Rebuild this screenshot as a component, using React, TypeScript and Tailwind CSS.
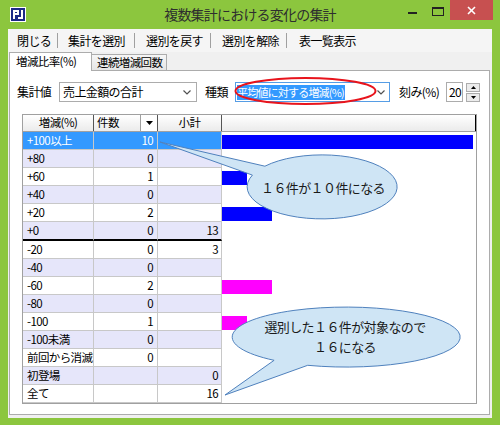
import React from 'react';

type Row = {
  label: string;
  count: string;
  sub: string;
  bar: number;
  color?: string;
  sel?: boolean;
};

const rows: Row[] = [
  { label: '+100以上', count: '10', sub: '', bar: 10, color: '#0000ff', sel: true },
  { label: '+80', count: '0', sub: '', bar: 0 },
  { label: '+60', count: '1', sub: '', bar: 1, color: '#0000ff' },
  { label: '+40', count: '0', sub: '', bar: 0 },
  { label: '+20', count: '2', sub: '', bar: 2, color: '#0000ff' },
  { label: '+0', count: '0', sub: '13', bar: 0 },
  { label: '-20', count: '0', sub: '3', bar: 0 },
  { label: '-40', count: '0', sub: '', bar: 0 },
  { label: '-60', count: '2', sub: '', bar: 2, color: '#ff00ff' },
  { label: '-80', count: '0', sub: '', bar: 0 },
  { label: '-100', count: '1', sub: '', bar: 1, color: '#ff00ff' },
  { label: '-100未満', count: '0', sub: '', bar: 0 },
  { label: '前回から消滅', count: '0', sub: '', bar: 0 },
  { label: '初登場', count: '', sub: '0', bar: 0 },
  { label: '全て', count: '', sub: '16', bar: 0 },
];

const BAR_UNIT = 25.1;

function AppIcon() {
  return (
    <svg width="16" height="15" viewBox="0 0 16 15">
      <rect x="0" y="0" width="16" height="15" fill="#ffffff" />
      <rect x="1" y="1" width="14" height="13" fill="#1c2a86" />
      {/* P */}
      <rect x="3" y="3" width="2" height="9" fill="#ffffff" />
      <rect x="3" y="3" width="5" height="2" fill="#ffffff" />
      <rect x="7" y="3" width="2" height="5" fill="#ffffff" />
      <rect x="3" y="6" width="5" height="2" fill="#ffffff" />
      {/* J */}
      <rect x="11" y="3" width="2" height="8" fill="#ffffff" />
      <rect x="8" y="10" width="5" height="2" fill="#ffffff" />
    </svg>
  );
}

function Chevron() {
  return (
    <svg width="8" height="5" viewBox="0 0 8 5">
      <polyline points="0.5,0.5 4,4 7.5,0.5" fill="none" stroke="#505050" strokeWidth="1.2" />
    </svg>
  );
}

function Triangle({ up = false, size = 7 }: { up?: boolean; size?: number }) {
  const h = Math.ceil(size / 2);
  return (
    <svg width={size} height={h} viewBox={`0 0 ${size} ${h}`}>
      <polygon points={up ? `0,${h} ${size / 2},0 ${size},${h}` : `0,0 ${size},0 ${size / 2},${h}`} fill="#000000" />
    </svg>
  );
}

function Overlay() {
  const font = "'Noto Sans CJK JP', 'Noto Sans', sans-serif";
  return (
    <svg className="absolute inset-0 pointer-events-none" width="500" height="425" viewBox="0 0 500 425">
      {/* red annotation ring */}
      <ellipse cx="305.5" cy="91" rx="70" ry="13" fill="none" stroke="#e8141c" strokeWidth="2" />
      {/* callout 1 */}
      <path
        d="M 264.9 166.2 L 160 142 L 252.4 175.1 A 75 32 0 1 0 264.9 166.2 Z"
        fill="#cfe5f5"
        stroke="#4f81bd"
        strokeWidth="1"
      />
      <text x="323" y="193" textAnchor="middle" fontFamily={font} fontSize="13" fill="#1a1a1a">
        １６件が１０件になる
      </text>
      {/* callout 2 */}
      <path
        d="M 274.1 360.3 L 225 395 L 307.7 365.3 A 114 30 0 1 0 274.1 360.3 Z"
        fill="#cfe5f5"
        stroke="#4f81bd"
        strokeWidth="1"
      />
      <text x="345" y="332" textAnchor="middle" fontFamily={font} fontSize="13" fill="#1a1a1a">
        選別した１６件が対象なので
      </text>
      <text x="345" y="352" textAnchor="middle" fontFamily={font} fontSize="13" fill="#1a1a1a">
        １６になる
      </text>
    </svg>
  );
}

export default function App() {
  return (
    <div className="relative w-[500px] h-[425px] bg-[#8cc63e] flex flex-col font-['Noto_Sans_CJK_JP','Noto_Sans',sans-serif] text-[11.5px] tracking-[-0.6px] text-black whitespace-nowrap overflow-hidden">
      {/* Title bar */}
      <div className="grid grid-cols-[1fr_auto_1fr] h-[29px] shrink-0">
        <div className="flex items-center pl-[10px]">
          <AppIcon />
        </div>
        <div className="flex items-center text-[14px] tracking-[-0.8px] text-[#2e2e2e]">
          複数集計における変化の集計
        </div>
        <div className="flex justify-end items-start pr-[7px]">
          <div className="w-[25px] h-[20px] flex justify-center">
            <div className="mt-[12px] w-[9px] h-[2px] bg-[#222]" />
          </div>
          <div className="w-[25px] h-[20px] flex justify-center">
            <div className="mt-[7px] w-[12px] h-[9px] border border-[#222] border-t-2" />
          </div>
          <div className="w-[43px] h-[20px] bg-[#c75050] flex items-center justify-center">
            <svg width="9" height="9" viewBox="0 0 9 9">
              <line x1="1" y1="1" x2="8" y2="8" stroke="#ffffff" strokeWidth="1.6" />
              <line x1="8" y1="1" x2="1" y2="8" stroke="#ffffff" strokeWidth="1.6" />
            </svg>
          </div>
        </div>
      </div>

      {/* Client area */}
      <div className="flex-1 mx-[8px] mb-[7px] bg-[#f0f0f0] flex flex-col">
        {/* Menu */}
        <div className="h-[23px] shrink-0 flex items-center bg-[#f5f5f5] text-[12px]">
          <div className="w-[49px] pl-[9px]">閉じる</div>
          <div className="w-px h-[15px] bg-[#a0a0a0]" />
          <div className="w-[76px] pl-[10px]">集計を選別</div>
          <div className="w-px h-[15px] bg-[#a0a0a0]" />
          <div className="w-[75px] pl-[11px]">選別を戻す</div>
          <div className="w-px h-[15px] bg-[#a0a0a0]" />
          <div className="w-[75px] pl-[11px]">選別を解除</div>
          <div className="w-px h-[15px] bg-[#a0a0a0]" />
          <div className="pl-[12px]">表一覧表示</div>
        </div>

        {/* Tabs */}
        <div className="h-[18px] shrink-0 flex items-end pl-[1px]">
          <div className="relative z-10 -mb-px w-[83px] h-[19px] bg-white border border-b-0 border-[#acacac] flex items-center pl-[6px] leading-none">
            増減比率(%)
          </div>
          <div className="w-[75px] h-[16px] bg-gradient-to-b from-[#f6f6f6] to-[#e5e5e5] border border-l-0 border-b-0 border-[#acacac] flex items-center pl-[5px] leading-none">
            連続増減回数
          </div>
        </div>

        {/* Panel */}
        <div className="flex-1 ml-[1px] mr-[2px] mb-[3px] bg-white border border-[#acacac] flex flex-col pt-[11px]">
          {/* Controls */}
          <div className="h-[20px] flex items-center pl-[7px] leading-none text-[12px]">
            <div className="w-[42px]">集計値</div>
            <div className="w-[138px] h-[20px] border border-[#acacac] bg-white flex items-center justify-between pl-[3px] pr-[5px]">
              <span>売上金額の合計</span>
              <Chevron />
            </div>
            <div className="w-[38px] pl-[8px]">種類</div>
            <div className="w-[155px] h-[20px] border border-[#569de5] bg-white flex items-center justify-between pl-[1px] pr-[4px]">
              <span className="bg-[#3399ff] text-white h-[15px] flex items-center pr-[1px] text-[11px] tracking-[-0.8px]">平均値に対する増減(%)</span>
              <Chevron />
            </div>
            <div className="w-[56px] pl-[9px]">刻み(%)</div>
            <div className="w-[17px] h-[20px] border border-[#acacac] bg-white flex items-center pl-[2px]">20</div>
            <div className="ml-[3px] flex flex-col gap-px">
              <div className="w-[14px] h-[9px] border border-[#acacac] bg-[#ececec] flex items-center justify-center">
                <Triangle up size={5} />
              </div>
              <div className="w-[14px] h-[9px] border border-[#acacac] bg-[#ececec] flex items-center justify-center">
                <Triangle size={5} />
              </div>
            </div>
          </div>

          {/* Table */}
          <div className="mt-[12px] ml-[12px] w-[455px] border border-[#a0a0a0] flex flex-col leading-none">
            {/* Header */}
            <div className="h-[17px] flex border-b border-[#a0a0a0] bg-gradient-to-b from-white to-[#ebebeb]">
              <div className="w-[71px] border-r border-[#555] flex items-center justify-center">増減(%)</div>
              <div className="w-[64px] border-r border-[#555] flex items-center justify-between pl-[3px]">
                <span>件数</span>
                <div className="w-[17px] h-full bg-white border-l border-[#a0a0a0] flex items-center justify-center">
                  <Triangle size={7} />
                </div>
              </div>
              <div className="w-[64px] border-r border-[#555] flex items-center justify-center">小計</div>
              <div className="flex-1 border-r border-black" />
            </div>

            {/* Body */}
            {rows.map((r, i) => {
              const thick = r.label === '+0';
              const base = r.sel ? 'bg-[#3399ff] text-white' : i % 2 === 1 ? 'bg-[#e6e6fa]' : 'bg-white';
              const line = thick ? 'border-b-2 border-b-black' : 'border-b border-b-[#c8c8c8]';
              return (
                <div key={r.label} className={`flex ${thick ? 'h-[19px]' : 'h-[18px]'}`}>
                  <div className={`w-[71px] border-r border-r-[#c8c8c8] ${line} ${base} flex items-center pl-[4px]`}>
                    {r.label}
                  </div>
                  <div className={`w-[64px] border-r border-r-[#c8c8c8] ${line} ${base} flex items-center justify-end pr-[4px]`}>
                    {r.count}
                  </div>
                  <div className={`w-[64px] border-r border-r-[#c8c8c8] ${line} ${base} flex items-center justify-end pr-[3px]`}>
                    {r.sub}
                  </div>
                  <div className="flex-1 bg-white pt-[3px]">
                    {r.bar > 0 && (
                      <div className="h-[14px]" style={{ width: r.bar * BAR_UNIT, backgroundColor: r.color }} />
                    )}
                  </div>
                </div>
              );
            })}
          </div>
        </div>
      </div>

      <Overlay />
    </div>
  );
}
